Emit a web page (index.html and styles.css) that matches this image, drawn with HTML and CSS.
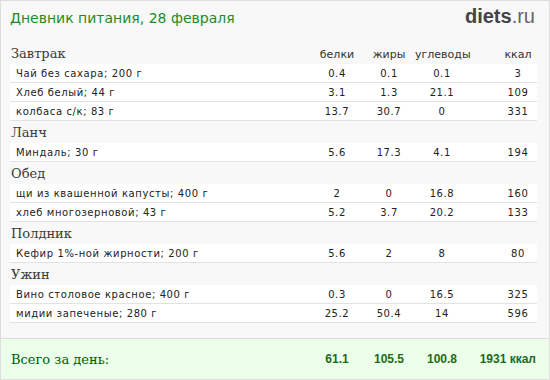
FILE: index.html
```html
<!DOCTYPE html>
<html lang="ru">
<head>
<meta charset="utf-8">
<title>Дневник питания</title>
<link rel="stylesheet" href="styles.css">
</head>
<body>
<div class="page">
  <div class="content">
    <div class="top">
      <h1 class="title">Дневник питания, 28 февраля</h1>
      <div class="logo"><b>diets</b>.ru</div>
    </div>

    <div class="meal-head grid">
      <span class="meal-name">Завтрак</span>
      <span class="col">белки</span><span class="col">жиры</span><span class="col">углеводы</span><span class="col kc">ккал</span>
    </div>
    <div class="row grid"><span class="name">Чай без сахара; 200 г</span><span class="col">0.4</span><span class="col">0.1</span><span class="col">0.1</span><span class="col kc">3</span></div>
    <div class="row grid"><span class="name">Хлеб белый; 44 г</span><span class="col">3.1</span><span class="col">1.3</span><span class="col">21.1</span><span class="col kc">109</span></div>
    <div class="row grid"><span class="name">колбаса с/к; 83 г</span><span class="col">13.7</span><span class="col">30.7</span><span class="col">0</span><span class="col kc">331</span></div>

    <div class="meal-head"><span class="meal-name">Ланч</span></div>
    <div class="row grid"><span class="name">Миндаль; 30 г</span><span class="col">5.6</span><span class="col">17.3</span><span class="col">4.1</span><span class="col kc">194</span></div>

    <div class="meal-head"><span class="meal-name">Обед</span></div>
    <div class="row grid"><span class="name">щи из квашенной капусты; 400 г</span><span class="col">2</span><span class="col">0</span><span class="col">16.8</span><span class="col kc">160</span></div>
    <div class="row grid"><span class="name">хлеб многозерновой; 43 г</span><span class="col">5.2</span><span class="col">3.7</span><span class="col">20.2</span><span class="col kc">133</span></div>

    <div class="meal-head"><span class="meal-name">Полдник</span></div>
    <div class="row grid"><span class="name">Кефир 1%-ной жирности; 200 г</span><span class="col">5.6</span><span class="col">2</span><span class="col">8</span><span class="col kc">80</span></div>

    <div class="meal-head"><span class="meal-name">Ужин</span></div>
    <div class="row grid"><span class="name">Вино столовое красное; 400 г</span><span class="col">0.3</span><span class="col">0</span><span class="col">16.5</span><span class="col kc">325</span></div>
    <div class="row grid"><span class="name">мидии запеченые; 280 г</span><span class="col">25.2</span><span class="col">50.4</span><span class="col">14</span><span class="col kc">596</span></div>
  </div>

  <div class="total">
    <div class="total-inner grid">
      <span class="total-label">Всего за день:</span>
      <span class="col">61.1</span><span class="col">105.5</span><span class="col">100.8</span><span class="col total-kc">1931 ккал</span>
    </div>
  </div>
</div>
</body>
</html>
```

FILE: styles.css
```css
html, body {
  margin: 0;
  padding: 0;
  background: #f8f8f8;
}

.page {
  width: 548px;
  height: 378px;
  border: 1px solid #dedede;
  background: #f8f8f8;
  display: flex;
  flex-direction: column;
  font-family: "DejaVu Sans", Verdana, sans-serif;
  color: #222;
}

.content {
  padding: 0 12px 0 9px;
  flex: 1;
}

.top {
  height: 41px;
  display: flex;
  justify-content: space-between;
  align-items: flex-start;
}

.title {
  margin: 8px 0 0 0;
  font-weight: normal;
  font-size: 14px;
  color: #228b22;
  line-height: 18px;
}

.logo {
  margin: 5px 2px 0 0;
  font-family: "Liberation Sans", Arial, sans-serif;
  font-size: 20px;
  line-height: 20px;
  color: #666;
}

.logo b {
  color: #444;
}

.grid {
  display: grid;
  grid-template-columns: 1fr 52px 52px 54px 68px;
  align-items: center;
}

.meal-head {
  height: 22px;
  display: grid;
  align-items: center;
}

.meal-head.grid {
  grid-template-columns: 1fr 52px 52px 54px 68px;
}

.meal-name {
  font-family: "DejaVu Serif", Georgia, serif;
  font-size: 13px;
  color: #3a3a3a;
  padding-left: 1px;
  padding-top: 1px;
}

.meal-head .col {
  font-size: 11px;
  color: #333;
  letter-spacing: 0;
  padding-top: 2px;
}

.col {
  text-align: center;
}

.kc {
  padding-left: 30px;
}

.row {
  height: 18px;
  background: #fff;
  border-bottom: 1px solid #e2e2e2;
  font-size: 10px;
  letter-spacing: 0.6px;
  color: #222;
}

.name {
  padding-left: 6px;
  white-space: nowrap;
}

.total {
  height: 40px;
  border-top: 1px solid #dcdcdc;
  background: #ebffea;
  display: flex;
  align-items: center;
}

.total-inner {
  flex: 1;
  padding: 0 12px 0 9px;
  color: #1d6b1d;
}

.total-label {
  font-family: "DejaVu Serif", Georgia, serif;
  font-size: 13px;
  color: #006000;
  padding-left: 1px;
}

.total-inner .col {
  font-family: "Liberation Sans", Arial, sans-serif;
  font-weight: bold;
  font-size: 12px;
}

.total-inner .total-kc {
  text-align: right;
  padding-left: 0;
  padding-right: 1px;
}
```
